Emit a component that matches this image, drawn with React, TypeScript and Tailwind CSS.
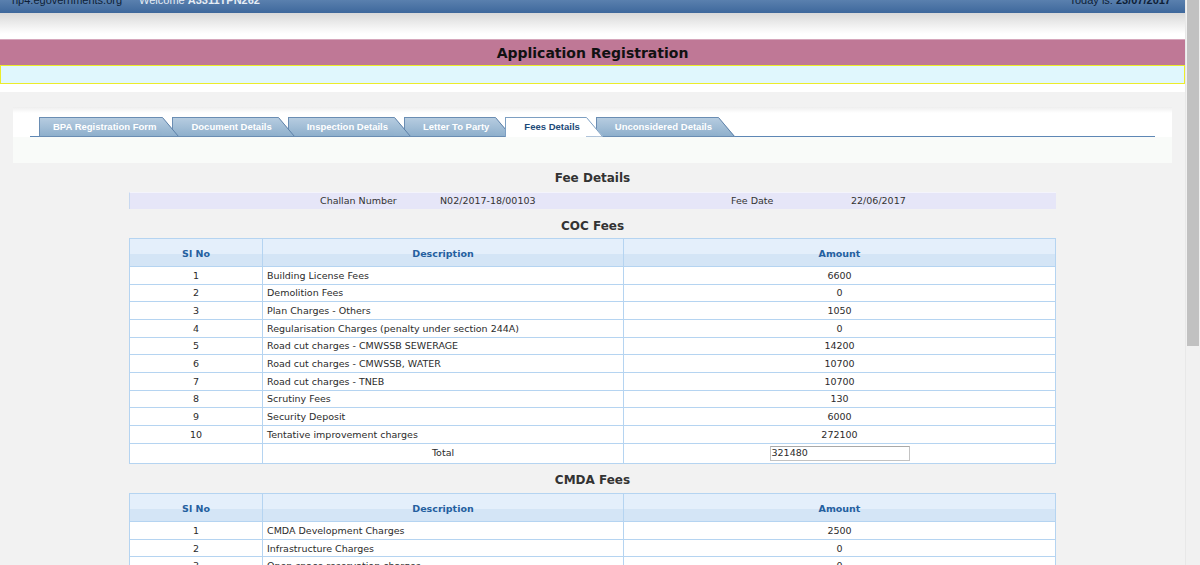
import React from 'react'

type FeeRow = { no: number; desc: string; amount: string }

const cocFees: FeeRow[] = [
  { no: 1, desc: 'Building License Fees', amount: '6600' },
  { no: 2, desc: 'Demolition Fees', amount: '0' },
  { no: 3, desc: 'Plan Charges - Others', amount: '1050' },
  { no: 4, desc: 'Regularisation Charges (penalty under section 244A)', amount: '0' },
  { no: 5, desc: 'Road cut charges - CMWSSB SEWERAGE', amount: '14200' },
  { no: 6, desc: 'Road cut charges - CMWSSB, WATER', amount: '10700' },
  { no: 7, desc: 'Road cut charges - TNEB', amount: '10700' },
  { no: 8, desc: 'Scrutiny Fees', amount: '130' },
  { no: 9, desc: 'Security Deposit', amount: '6000' },
  { no: 10, desc: 'Tentative improvement charges', amount: '272100' },
]

const cmdaFees: FeeRow[] = [
  { no: 1, desc: 'CMDA Development Charges', amount: '2500' },
  { no: 2, desc: 'Infrastructure Charges', amount: '0' },
  { no: 3, desc: 'Open space reservation charges', amount: '0' },
]

const tabs = [
  { title: 'BPA Registration Form', first: true },
  { title: 'Document Details' },
  { title: 'Inspection Details' },
  { title: 'Letter To Party' },
  { title: 'Fees Details', active: true },
  { title: 'Unconsidered Details' },
]

const Tab = ({ title, active, first, z }: { title: string; active?: boolean; first?: boolean; z: string }) => (
  <div className={`relative -mb-px flex h-[20px] ${first ? '' : '-ml-[7px]'} ${z}`}>
    <div
      className={`flex items-center border-l border-t ${first ? 'pl-[13px]' : 'pl-[18px]'} pr-[6px] ${
        active
          ? 'border-[#7d9fc2] bg-white text-[#1d4a78]'
          : 'border-b border-[#6a8db3] bg-[linear-gradient(#b6cce0,#8eafcc)] text-white'
      }`}
    >
      <span className="whitespace-nowrap font-['Liberation_Sans',Arial,sans-serif] text-[9.5px] font-bold">
        {title}
      </span>
    </div>
    <svg width="17" height="20" viewBox="0 0 17 20" className="block">
      <defs>
        <linearGradient id="tabgrad" x1="0" y1="0" x2="0" y2="1">
          <stop offset="0" stopColor="#b6cce0" />
          <stop offset="1" stopColor="#8eafcc" />
        </linearGradient>
      </defs>
      <polygon
        points="0,0.5 0.5,0.5 17,19.5 0,19.5"
        fill={active ? '#ffffff' : 'url(#tabgrad)'}
      />
      <line x1="0" y1="0.5" x2="0.5" y2="0.5" stroke={active ? '#7d9fc2' : '#6a8db3'} />
      <line x1="0.5" y1="0.5" x2="16.5" y2="19.5" stroke={active ? '#7d9fc2' : '#5d80a8'} />
      {!active && <line x1="0" y1="19.5" x2="17" y2="19.5" stroke="#6a8db3" />}
    </svg>
  </div>
)

const FeeTable = ({ rows, total }: { rows: FeeRow[]; total?: string }) => (
  <table className="w-[927px] table-fixed border-collapse border border-[#b5d4f1] text-[9.5px] text-[#2b2b2b]">
    <colgroup>
      <col className="w-[133px]" />
      <col className="w-[361px]" />
      <col />
    </colgroup>
    <thead>
      <tr className="h-[28px] bg-[linear-gradient(#e4effb_55%,#d4e5f6_55%)] text-[#24609f]">
        <th className="border border-[#b5d4f1] pt-[3px] font-bold">Sl No</th>
        <th className="border border-[#b5d4f1] pt-[3px] font-bold">Description</th>
        <th className="border border-[#b5d4f1] pt-[3px] font-bold">Amount</th>
      </tr>
    </thead>
    <tbody className="bg-white">
      {rows.map((r) => (
        <tr key={r.no} className="h-[17.67px]">
          <td className="border border-[#b5d4f1] p-0 pt-[1px] text-center">{r.no}</td>
          <td className="border border-[#b5d4f1] py-0 pt-[1px] pl-[4px]">{r.desc}</td>
          <td className="border border-[#b5d4f1] p-0 pt-[1px] text-center">{r.amount}</td>
        </tr>
      ))}
      {total && (
        <tr className="h-[20.6px]">
          <td className="border border-[#b5d4f1]"></td>
          <td className="border border-[#b5d4f1] p-0 text-center">Total</td>
          <td className="border border-[#b5d4f1] p-0">
            <div className="flex justify-center">
              <div className="flex h-[15px] w-[140px] items-center border border-[#c3c3c3] border-t-[#a9a9a9] bg-white pl-[1px]">
                {total}
              </div>
            </div>
          </td>
        </tr>
      )}
    </tbody>
  </table>
)

export default function App() {
  return (
    <div className="flex h-[565px] w-[1200px] overflow-hidden bg-[#f2f2f2] font-['DejaVu_Sans',Verdana,sans-serif]">
      <div className="w-[1185px] shrink-0">
        {/* top strip */}
        <div className="h-[13px] overflow-hidden bg-[linear-gradient(#5a80ae,#3e689c)] font-['Liberation_Sans',Arial,sans-serif] text-[11px] leading-[13px]">
          <div className="-mt-[6px] flex pl-[12px] pr-[14px]">
            <span className="text-[#0e1e36]">rlp4.egovernments.org</span>
            <span className="ml-[17px] text-[#e6edf5]">
              Welcome <b>A3311TPN262</b>
            </span>
            <span className="ml-auto text-[#0e1e36]">
              Today is: <b>23/07/2017</b>
            </span>
          </div>
        </div>
        <div className="h-[26px] bg-[linear-gradient(#d9d9d9,#ffffff_80%)]"></div>

        {/* title */}
        <div className="flex h-[26px] items-center justify-center border-t border-[#d6a7bc] bg-[#bf7896] pt-[2px]">
          <h1 className="text-[14px] font-bold text-[#111]">Application Registration</h1>
        </div>
        <div className="h-[19px] border border-[#ecec2a] bg-[#e0f7fd]"></div>
        <div className="h-[8px] bg-white"></div>

        {/* tabs panel */}
        <div className="ml-[13px] mt-[15px] h-[56px] w-[1159px] bg-[#f9fbf9]">
          <div className="bg-[linear-gradient(#eeeeee,#ffffff_20%)] px-[17px] pt-[10px]">
            <div className="flex h-[20px] items-end border-b border-[#5e87b5] pl-[9px]">
              {tabs.map((t, i) => (
                <Tab
                  key={t.title}
                  title={t.title}
                  active={t.active}
                  first={t.first}
                  z={['z-[6]', 'z-[5]', 'z-[4]', 'z-[3]', 'z-[7]', 'z-[1]'][i]}
                />
              ))}
            </div>
          </div>
        </div>

        {/* fee details */}
        <div className="ml-[129px] w-[927px]">
          <h2 className="flex h-[29px] items-center justify-center pt-[1px] text-[12px] font-bold text-[#333]">
            Fee Details
          </h2>
          <div className="flex h-[17px] items-center border-l border-t border-l-[#c8d8f0] border-t-[#f4f4fc] bg-[#e6e6f8] text-[9.5px] text-[#333]">
            <span className="w-[190px]"></span>
            <span className="w-[120px]">Challan Number</span>
            <span className="w-[291px]">N02/2017-18/00103</span>
            <span className="w-[120px]">Fee Date</span>
            <span>22/06/2017</span>
          </div>

          <h2 className="flex h-[29px] items-center justify-center pt-[4px] text-[12px] font-bold text-[#333]">
            COC Fees
          </h2>
          <FeeTable rows={cocFees} total="321480" />

          <h2 className="flex h-[29px] items-center justify-center pt-[3px] text-[12px] font-bold text-[#333]">
            CMDA Fees
          </h2>
          <FeeTable rows={cmdaFees} />
        </div>
      </div>

      {/* scrollbar */}
      <div className="h-full w-[15px] border-l border-[#e8e8e8] bg-[#f1f1f1] pl-[1px]">
        <div className="h-[346px] w-[12px] bg-[#c1c1c1]"></div>
      </div>
    </div>
  )
}
